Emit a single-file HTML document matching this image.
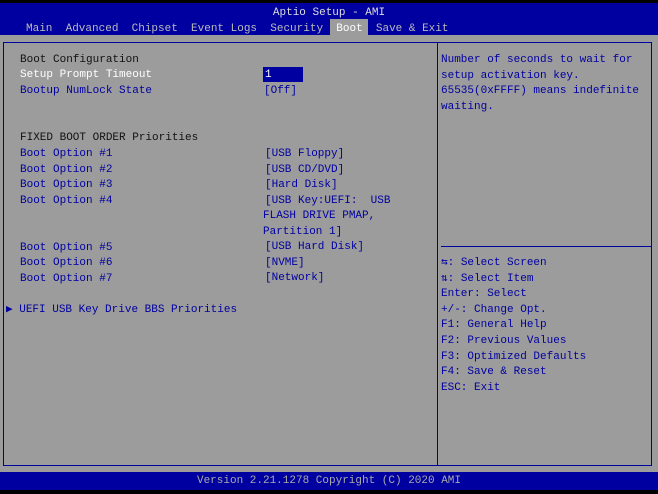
<!DOCTYPE html><html><head><style>
body{margin:0;width:658px;height:494px;background:#000;position:relative;overflow:hidden;font-family:"Liberation Mono",monospace;font-size:11px}
.a{position:absolute;white-space:pre;line-height:15.6px}
.b{color:#0000a0}.w{color:#fff}.k{color:#111}
</style></head><body>
<div style="position:absolute;left:0;top:3px;width:658px;height:32px;background:#0000a0"></div>
<div style="position:absolute;left:0;top:35px;width:658px;height:437px;background:#9c9c9c"></div>
<div style="position:absolute;left:0;top:472px;width:658px;height:18px;background:#0000a0"></div>
<div style="position:absolute;left:330px;top:19px;width:38px;height:16px;background:#9c9c9c"></div>
<div class="a" style="left:0;width:658px;text-align:center;top:6px;color:#ddd">Aptio Setup - AMI</div>
<div class="a" style="left:26px;top:22px;color:#bbb">Main  Advanced  Chipset  Event Logs  Security  <span style="color:#fff">Boot</span>  Save &amp; Exit</div>
<div style="position:absolute;left:3px;top:42px;width:647px;height:422px;border:1px solid #0000a0"></div>
<div style="position:absolute;left:437px;top:42px;width:1px;height:423px;background:#0000a0"></div>
<div style="position:absolute;left:441px;top:246px;width:210px;height:1px;background:#0000a0"></div>
<div style="position:absolute;left:263px;top:67px;width:40px;height:15px;background:#0000a0"></div>
<div class="a k" style="left:20px;top:53px">Boot Configuration</div>
<div class="a w" style="left:20px;top:68px">Setup Prompt Timeout</div>
<div class="a w" style="left:265px;top:68px">1</div>
<div class="a b" style="left:20px;top:84px">Bootup NumLock State</div>
<div class="a b" style="left:264px;top:84px">[Off]</div>
<div class="a k" style="left:20px;top:131px">FIXED BOOT ORDER Priorities</div>
<div class="a b" style="left:20px;top:147px">Boot Option #1
Boot Option #2
Boot Option #3
Boot Option #4


Boot Option #5
Boot Option #6
Boot Option #7</div>
<div class="a b" style="left:265px;top:147px">[USB Floppy]
[USB CD/DVD]
[Hard Disk]
[USB Key:UEFI:  USB</div>
<div class="a b" style="left:263px;top:209px">FLASH DRIVE PMAP,
Partition 1]</div>
<div class="a b" style="left:265px;top:240px">[USB Hard Disk]
[NVME]
[Network]</div>
<div class="a b" style="left:6px;top:303px">▶ UEFI USB Key Drive BBS Priorities</div>
<div class="a b" style="left:441px;top:53px">Number of seconds to wait for
setup activation key.
65535(0xFFFF) means indefinite
waiting.</div>
<div class="a b" style="left:441px;top:256px">⇆: Select Screen
⇅: Select Item
Enter: Select
+/-: Change Opt.
F1: General Help
F2: Previous Values
F3: Optimized Defaults
F4: Save &amp; Reset
ESC: Exit</div>
<div class="a" style="left:0;width:658px;text-align:center;top:474px;color:#aaa">Version 2.21.1278 Copyright (C) 2020 AMI</div>
</body></html>
